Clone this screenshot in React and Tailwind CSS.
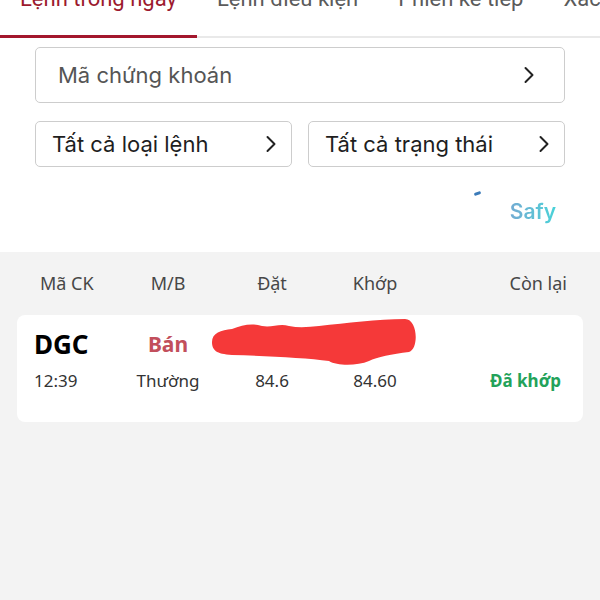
import React from 'react';
import { ChevronRight } from 'lucide-react';

const tabs = ['Lệnh trong ngày', 'Lệnh điều kiện', 'Phiên kế tiếp', 'Xác nhận lệnh'];

function Select({ label, className, textClass }) {
  return (
    <div className={`flex items-center justify-between border border-[#cdcdcd] rounded-[5px] bg-white ${className}`}>
      <span className={textClass}>{label}</span>
      <ChevronRight size={28} strokeWidth={1.7} className="text-[#222]" />
    </div>
  );
}

function Scribble() {
  return (
    <svg className="absolute left-0 top-0" width="566" height="107" viewBox="0 0 566 107">
      <path
        fill="#f53939"
        d="M195 27 C195 18 204 15 215 14 C225 10 235 8 245 11 C255 13 262 8 272 11 C282 13 292 12 302 11 C330 8 360 4 388 4 C401 4 402 34 392 37 C375 39 360 42 352 46 C340 51 320 51 312 46 C290 43 250 41 215 40 C199 39 195 35 195 27 Z"
      />
    </svg>
  );
}

export default function App() {
  return (
    <div className="w-[600px] h-[600px] overflow-hidden bg-white font-['Inter','Liberation_Sans',sans-serif]">
      {/* tabs */}
      <div className="-mt-[13px] flex border-b-2 border-[#e9e9e9] font-['Roboto',sans-serif] text-[22px] leading-[24px] whitespace-nowrap">
        {tabs.map((t, i) => (
          <div
            key={t}
            className={`px-[20px] pb-[24px] -mb-[2px] border-b-[3px] ${i === 0 ? 'text-[#9c1a2e] border-[#a3172d]' : 'text-[#5b5b5b] border-transparent'}`}
          >
            {t}
          </div>
        ))}
      </div>

      {/* filters */}
      <div className="px-[35px] pt-[9px]">
        <Select
          label="Mã chứng khoán"
          className="h-[56px] pl-[22px] pr-[21px]"
          textClass="text-[22px] text-[#555]"
        />
        <div className="mt-[18px] grid grid-cols-2 gap-[16px]">
          <Select label="Tất cả loại lệnh" className="h-[46px] pl-[16px] pr-[6px]" textClass="text-[22px] text-[#1e1e1e]" />
          <Select label="Tất cả trạng thái" className="h-[46px] pl-[16px] pr-[6px]" textClass="text-[22px] text-[#1e1e1e]" />
        </div>
      </div>

      {/* brand */}
      <div className="h-[85px] relative">
        <div className="absolute left-[474px] top-[25px] w-[7px] h-[3px] bg-[#3b7bb9] rounded-full -rotate-[20deg]" />
        <div className="absolute right-[44px] top-[29px] text-[21px] font-semibold bg-gradient-to-r from-[#72abd2] to-[#47d2d8] bg-clip-text text-transparent">
          Safy
        </div>
      </div>

      {/* list */}
      <div className="bg-[#f3f3f3] h-[400px] px-[17px] font-['Noto_Sans','Open_Sans',sans-serif]">
        <div className="grid grid-cols-[83px_136px_72px_134px_1fr] items-center h-[63px] text-[18px] text-[#474747]">
          <div className="pl-[23px]">Mã CK</div>
          <div className="text-center">M/B</div>
          <div className="text-center">Đặt</div>
          <div className="text-center">Khớp</div>
          <div className="text-right pr-[16px]">Còn lại</div>
        </div>
        <div className="relative bg-white rounded-[8px] h-[107px] pt-[10px]">
          <div className="grid grid-cols-[83px_136px_72px_134px_1fr] items-center h-[32px]">
            <div className="pl-[17px] text-[26px] font-bold text-black">DGC</div>
            <div className="text-center text-[21px] font-bold text-[#c24f5c]">Bán</div>
          </div>
          <div className="grid grid-cols-[83px_136px_72px_134px_1fr] items-center h-[32px] mt-[8px] text-[17px] text-[#333]">
            <div className="pl-[17px]">12:39</div>
            <div className="text-center">Thường</div>
            <div className="text-center">84.6</div>
            <div className="text-center">84.60</div>
            <div className="text-right pr-[22px] font-bold text-[#23a25a]">Đã khớp</div>
          </div>
          <Scribble />
        </div>
      </div>
    </div>
  );
}
